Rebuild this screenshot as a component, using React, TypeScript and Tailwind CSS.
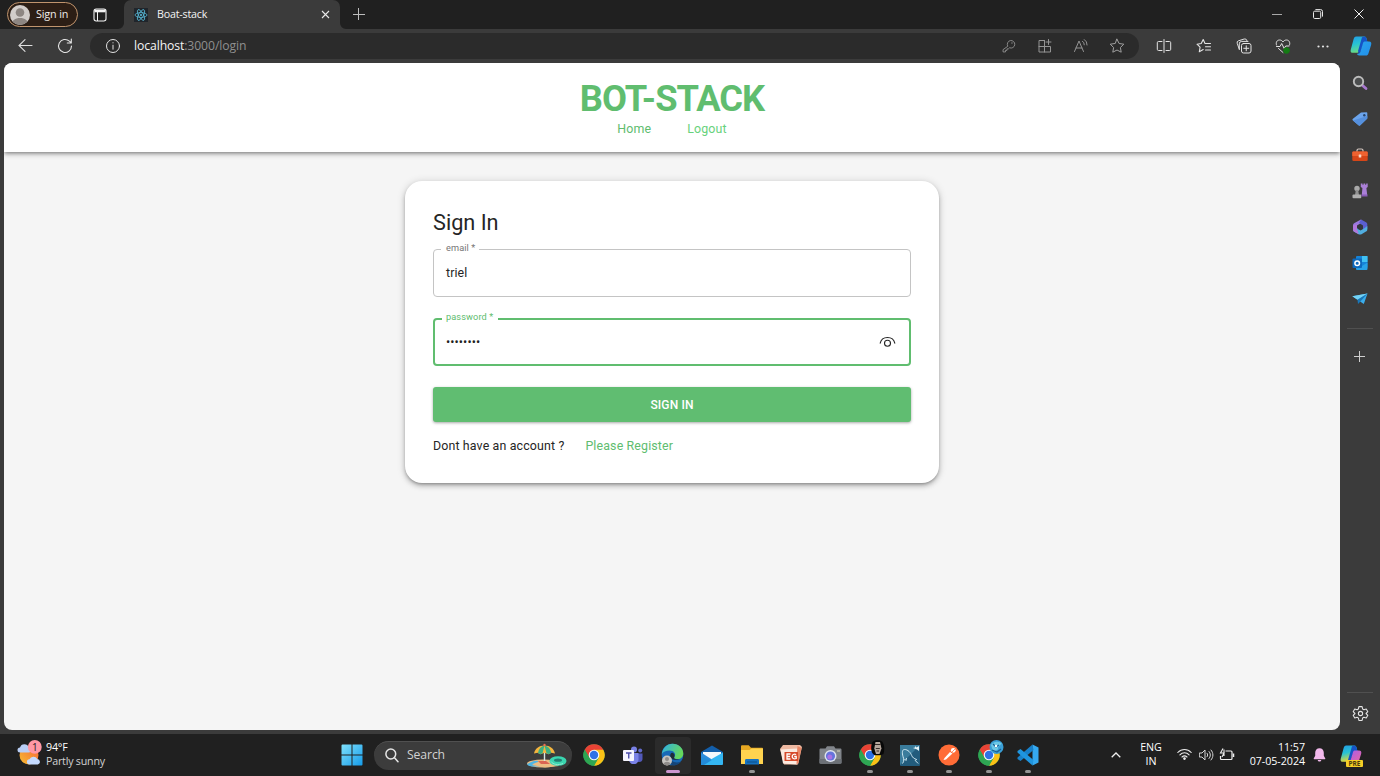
import React from "react";

type IconProps = { s?: number; c?: string; w?: number; children: React.ReactNode };

/* Stroked line icon on a 16 unit grid. */
const Line = ({ s = 16, c = "text-[#e4e4e4]", w = 1, children }: IconProps) => (
  <svg width={s} height={s} viewBox="0 0 16 16" fill="none" stroke="currentColor" strokeWidth={w} strokeLinecap="round" strokeLinejoin="round" className={`shrink-0 ${c}`}>
    {children}
  </svg>
);

const STAR = "M8 1.2l2.100 4.300 4.700.7-3.400 3.300.8 4.700L8 12l-4.200 2.200.8-4.700L1.200 6.200l4.700-.7z";

const Slot = ({ w, children }: { w: string; children?: React.ReactNode }) => (
  <div className={`flex h-full shrink-0 items-center justify-center ${w}`}>{children}</div>
);

function TitleBar() {
  return (
    <div className="flex h-[29px] shrink-0 items-center bg-[#202020]">
      <div className="ml-[7px] flex h-[25px] w-[71px] items-center rounded-full border border-[#c0946d] bg-[#2c1e15] pl-[2px]">
        <svg width="20" height="20" viewBox="0 0 20 20">
          <defs><clipPath id="avatar"><circle cx="10" cy="10" r="10" /></clipPath></defs>
          <g clipPath="url(#avatar)">
            <rect width="20" height="20" fill="#d2cdca" />
            <circle cx="10" cy="7.5" r="4.3" fill="#8d8682" />
            <path d="M2 20c0-5 3-7 8-7s8 2 8 7z" fill="#8d8682" />
          </g>
        </svg>
        <span className="ml-[6px] text-[10.8px] leading-none tracking-[-0.15px] whitespace-nowrap text-[#f2eeeb]">Sign in</span>
      </div>
      <Slot w="w-[43px]">
        <svg width="14" height="14" viewBox="0 0 14 14" fill="none" stroke="#f4f4f4">
          <rect x="1" y="1" width="12" height="12" rx="2.2" strokeWidth="1.1" />
          <path d="M1.500 3h11" strokeWidth="2.6" />
          <path d="M4.500 4v9" strokeWidth="1" />
        </svg>
      </Slot>
      <div className="relative ml-[3px] flex h-full w-[216px] items-center rounded-t-[7px] bg-[#3b3b3b]">
        <svg className="absolute bottom-0 -left-[6px]" width="6" height="6"><path d="M6 0v6H0a6 6 0 0 0 6-6" fill="#3b3b3b" /></svg>
        <svg className="absolute -right-[6px] bottom-0" width="6" height="6"><path d="M0 0v6h6a6 6 0 0 1-6-6" fill="#3b3b3b" /></svg>
        <svg className="ml-[10px]" width="14" height="14" viewBox="0 0 14 14" fill="none" stroke="#58b9d6" strokeWidth=".8">
          <rect width="14" height="14" fill="#20252b" stroke="none" />
          <ellipse cx="7" cy="7" rx="6" ry="2.4" />
          <ellipse cx="7" cy="7" rx="6" ry="2.4" transform="rotate(60 7 7)" />
          <ellipse cx="7" cy="7" rx="6" ry="2.4" transform="rotate(120 7 7)" />
          <circle cx="7" cy="7" r="1.1" fill="#58b9d6" stroke="none" />
        </svg>
        <span className="ml-[9px] text-[10.7px] leading-none tracking-[-0.200px] whitespace-nowrap text-[#f4f4f4]">Boat-stack</span>
        <div className="mr-[10px] ml-auto flex">
          <svg width="9" height="9" viewBox="0 0 9 9" stroke="#e8e8e8" strokeWidth="1.1"><path d="M1 1l7 7M8 1L1 8" /></svg>
        </div>
      </div>
      <svg className="mb-[2px] ml-[13px]" width="12" height="12" viewBox="0 0 12 12" stroke="#bdbdbd"><path d="M0 6.500h12M5.500 0v12" /></svg>
      <div className="ml-auto flex h-[28px] self-start">
        <Slot w="w-[41px]"><svg width="10" height="10" viewBox="0 0 10 10" stroke="#a8a8a8"><path d="M0 5.500h10" /></svg></Slot>
        <Slot w="w-[41px]">
          <svg width="10" height="10" viewBox="0 0 10 10" fill="none" stroke="#e8e8e8"><rect x=".5" y="2.200" width="7.200" height="7.300" rx="1.200" /><path d="M2.400.6h5.200a1.900 1.900 0 0 1 1.900 1.900v5.100" /></svg>
        </Slot>
        <Slot w="w-[42px]"><svg width="10" height="10" viewBox="0 0 10 10" stroke="#f2f2f2"><path d="M.5.5l9 9M9.500.5l-9 9" /></svg></Slot>
      </div>
    </div>
  );
}

function CopilotIcon({ id, size, warm }: { id: string; size: number; warm?: boolean }) {
  return (
    <svg width={size} height={size} viewBox="0 0 22 22">
      <defs>
        <linearGradient id={`${id}a`} x1="0" y1="0" x2=".3" y2="1"><stop offset="0" stopColor="#239ae6" /><stop offset=".5" stopColor="#27c3d4" /><stop offset="1" stopColor={warm ? "#e7d832" : "#6bdc83"} /></linearGradient>
        <linearGradient id={`${id}b`} x1="0" y1="0" x2="1" y2="1"><stop offset="0" stopColor={warm ? "#a05cf2" : "#29a5ec"} /><stop offset="1" stopColor={warm ? "#f0679b" : "#228eea"} /></linearGradient>
      </defs>
      <path d="M6.200 1.500h8.100c1.300 0 1.900.9 2.300 2.300L17.400 7H14c-1.700 0-2.300 1-2.800 2.600L9.400 15.500C9 17 8.200 17.800 6.700 17.800H3C.9 17.800.2 16.500.8 14.400L3.500 4.500C4 2.600 4.700 1.500 6.200 1.500z" fill={`url(#${id}a)`} />
      <path d="M12 2.200l2.600-.6c1.200.2 1.700 1 2 2.200l.9 3.400-4 .7-3 9-1.500 2.200L8 16z" fill="#1553c6" />
      <path d="M14.500 6.500h4.600c2 0 2.600 1.400 2 3.400l-2.500 8c-.6 1.900-1.300 2.600-2.800 2.600H9.200c-1.200 0-1.900-.5-2.200-1.700 2 .2 3-.5 3.500-2.200l2.300-7.900c.3-1.200.8-2 1.700-2.200z" fill={`url(#${id}b)`} />
    </svg>
  );
}

function Toolbar() {
  return (
    <div className="flex h-[34px] shrink-0 items-center bg-[#3b3b3b]">
      <Slot w="w-[50px]">
        <svg width="15" height="14" viewBox="0 0 15 14" fill="none" stroke="#dedede" strokeWidth="1.100" strokeLinecap="round"><path d="M14 6.500H1M7 .7L1 6.500l6 5.800" /></svg>
      </Slot>
      <Slot w="w-[30px]">
        <Line s={16} w={1.1}><path d="M14.500 8A6.500 6.500 0 1 1 12.400 3.200L14 4.700M14.300 1v4h-4" /></Line>
      </Slot>
      <div className="ml-[10px] flex h-[26px] w-[1049px] items-center rounded-full bg-[#2b2b2b]">
        <div className="ml-[15px] flex"><Line s={16}><circle cx="8" cy="8" r="6.500" /><path d="M8 7.200v4M8 4.700v.2" /></Line></div>
        <span className="ml-[13px] pt-px text-[12.200px] leading-none tracking-[-0.090px] whitespace-nowrap text-[#8f8f8f]"><span className="text-[#f5f5f5]">localhost</span>:3000/login</span>
        <div className="mr-[4px] ml-auto flex h-full">
          <Slot w="w-[36px]"><Line s={14} c="text-[#949494]"><path d="M6.400 7.900a4.300 4.300 0 1 1 2.200 2.100L7.300 11.300H5.700v1.700H4v1.800H1.200v-2.200z" /><path d="M11.400 4.600v.1" strokeWidth="1.500" /></Line></Slot>
          <Slot w="w-[36px]"><Line s={16} c="text-[#949494]"><path d="M7.500 2.500H2v11.500h11.500V8.500H2M7.500 2.500V14M11.500 1.500v5M9 4h5" /></Line></Slot>
          <Slot w="w-[36px]"><Line s={16} c="text-[#949494]"><path d="M1.500 13.500L6 3l4.500 10.500M3 10h6M9.500 3.200a4 4 0 0 1 1.800 3.600M11.300 1.500a6 6 0 0 1 2.800 5.500" /></Line></Slot>
          <Slot w="w-[36px]"><Line s={16} c="text-[#a0a0a0]"><path d={STAR} /></Line></Slot>
        </div>
      </div>
      <div className="ml-[5px] flex h-full">
        <Slot w="w-[40px]"><Line><path d="M8 1.500v13M6 3.500H2.500a1.200 1.200 0 0 0-1.200 1.200v6.600a1.200 1.200 0 0 0 1.200 1.200H6M10 3.500h3.500a1.200 1.200 0 0 1 1.200 1.200v6.600a1.200 1.200 0 0 1-1.200 1.200H10" /></Line></Slot>
        <Slot w="w-[40px]"><Line w={1.1}><path d="M9 5.500L7.200 1.500 5.200 5.500 1 6.200l3.100 3-.8 4.600L7.200 11.600M9 5.500h5.500M9.500 8.700h5M9.500 12h5" /></Line></Slot>
        <Slot w="w-[39px]"><Line><rect x="5.500" y="5.500" width="9.500" height="9.500" rx="2" /><path d="M10.250 7.800v5M7.750 10.300h5M3.300 11.300L1.200 5.300a2 2 0 0 1 1.300-2.500L8.200 1a2 2 0 0 1 2.500 1.300l.3.900M3.300 11.300V5.800a2.400 2.400 0 0 1 2.400-2.400H12" /></Line></Slot>
        <Slot w="w-[40px]"><Line><path d="M1.500 7C.5 4.500 2 2 4.500 2 6 2 7.200 2.700 8 4c.8-1.300 2-2 3.500-2C14 2 15.500 4.500 14.500 7M1.500 8.500H5L6.700 5.500l2.500 5L10.700 8H14M3.500 10.500L8 14.500" /><circle cx="11.500" cy="12.500" r="3" fill="#147b14" stroke="#147b14" strokeWidth=".6" /></Line></Slot>
        <Slot w="w-[39px]"><svg width="12" height="3" viewBox="0 0 12 3" fill="#e4e4e4"><circle cx="1.500" cy="1.500" r="1.100" /><circle cx="6" cy="1.500" r="1.100" /><circle cx="10.500" cy="1.500" r="1.100" /></svg></Slot>
        <Slot w="w-[37px]"><CopilotIcon id="top" size={22} /></Slot>
      </div>
    </div>
  );
}

function Sidebar() {
  const icons = [
    <g key="search"><path d="M10 10l4 3.500" stroke="#a878cf" strokeWidth="2.800" strokeLinecap="round" /><circle cx="6.500" cy="6.500" r="4.700" fill="#4b4d4e" stroke="#bcbcbc" strokeWidth="1.900" /></g>,
    <g key="tag"><path d="M9 1.500l5.500-.3c.5 0 .8.300.8.800V7.500L8.300 14.300c-.6.600-1.200.600-1.800 0L.9 9.600c-.6-.6-.6-1.200 0-1.800z" fill="#6ba4ec" /><path d="M1 9.500L15.300 5v2.600L8.300 14.300c-.6.600-1.200.600-1.800 0z" fill="#5590de" /><circle cx="12.300" cy="4.300" r="1.200" fill="#25456f" /></g>,
    <g key="tools"><path d="M5 5V3.500C5 2.300 5.500 2 6.500 2h3c1 0 1.500.3 1.500 1.500V5" fill="none" stroke="#d5c7c0" strokeWidth="1.200" /><rect x=".3" y="4.500" width="15.400" height="9.500" rx="1.300" fill="#d64618" /><path d="M.3 5.800c0-.8.500-1.300 1.300-1.300h12.800c.8 0 1.300.5 1.300 1.300V9H.3z" fill="#ee6230" /><rect x="6.700" y="7.500" width="2.600" height="3" rx=".5" fill="#f5d9c9" /></g>,
    <g key="games"><circle cx="5" cy="5.500" r="2.700" fill="#a9a9a9" /><path d="M3.800 7h2.400l.8 5H3z" fill="#929292" /><rect x=".5" y="11.500" width="8.800" height="3.800" rx="1" fill="#b0b0b0" /><path d="M8.800 .5h1.700v1.200h1V.5h1.700v1.200h1V.5h1.500v3.500l-1.300 1 .8 7H9.800l.6-7-1.600-1z" fill="#aa80d7" /><path d="M9.500 11.500h6V13.500H9.500z" fill="#8a5cb9" /></g>,
    <g key="m365"><path d="M9 .5L2.500 4C1.500 4.600 1 5.300 1 6.500v4l4 1.500V6.500L11 3z" fill="#9b78df" /><path d="M9 .5l5 2.800c1 .6 1.300 1.200 1.300 2.300V10L11 12V6.500L7 4z" fill="#5a5fd1" /><path d="M15.300 7v3.500c0 1-.4 1.600-1.300 2.100L9.500 15.200c-1 .5-2 .5-3 0L1.800 12.400c-.5-.3-.8-.9-.8-1.900L5 9l3.500 2.500L12 9.500z" fill="#50aee0" /><path d="M1 6.500v4c0 1 .3 1.600.8 1.900l5 2.800L5 10V5.500z" fill="#b277dc" /><circle cx="8" cy="8" r="2.600" fill="#33363f" /></g>,
    <g key="outlook"><rect x="4" y="1" width="11.500" height="12" rx="1" fill="#1683d7" /><path d="M10 1h5.500v6H10z" fill="#40c1f3" /><path d="M4 8l6 3 5.500-3.500V14a1 1 0 0 1-1 1H5a1 1 0 0 1-1-1z" fill="#27a1e7" /><rect x=".5" y="3.500" width="9.500" height="9.500" rx="1" fill="#0d69bd" /><circle cx="5.200" cy="8.200" r="2.300" fill="none" stroke="#fff" strokeWidth="1.500" /></g>,
    <g key="drop"><path d="M.3 5.300L15.500 2.500 11.800 13 7 9.800z" fill="#3badeb" /><path d="M.3 5.300L15.500 2.500 5.500 8.700z" fill="#73d2f5" /><path d="M5.500 8.700L15.500 2.500 8.200 10.700 6 13z" fill="#1a77b8" /></g>,
  ];
  return (
    <div className="flex w-[40px] shrink-0 flex-col items-center bg-[#3b3b3b]">
      <div className="mt-[2px] flex flex-col">
        {icons.map((g, i) => (
          <div key={i} className="flex h-[36px] items-center"><svg width="16" height="16" viewBox="0 0 16 16" fill="none">{g}</svg></div>
        ))}
      </div>
      <div className="mt-[11px] h-px w-[26px] bg-[#505050]" />
      <svg className="mt-[22px] mr-px" width="11" height="11" viewBox="0 0 11 11" stroke="#cfcfcf"><path d="M0 5.500h11M5.500 0v11" /></svg>
      <div className="mt-auto h-px w-[26px] bg-[#505050]" />
      <div className="mt-[12px] mb-[12px]">
        <Line s={17}><path d="M6.500 1.500h3l.5 2.200 1.200.7 2.200-.7 1.500 2.600L13.200 8l1.700 1.700-1.500 2.600-2.200-.7-1.200.7-.5 2.200h-3L6 12.300l-1.200-.7-2.200.7L1.100 9.700 2.800 8 1.100 6.300l1.500-2.600 2.200.7L6 3.700z" /><circle cx="8" cy="8" r="2" /></Line>
      </div>
    </div>
  );
}

function Page() {
  return (
    <div className="flex min-w-0 grow flex-col overflow-hidden rounded-[8px] bg-[#f5f5f5] font-['Roboto',sans-serif]">
      <header className="flex h-[89px] shrink-0 flex-col items-center bg-white shadow-[0_2px_3px_-1px_rgba(0,0,0,0.3),0_3px_4px_rgba(0,0,0,0.14),0_1px_7px_rgba(0,0,0,0.12)]">
        <h1 className="mt-[18px] h-[36px] text-[36.300px] leading-[36px] font-bold tracking-[-0.950px] text-[#60bd6f]">BOT-STACK</h1>
        <nav className="mt-[3px] flex gap-[36px] text-[12.400px] leading-[17px] tracking-[0.150px] text-[#60bd6f]">
          <a>Home</a>
          <a className="text-[#67d27c]">Logout</a>
        </nav>
      </header>
      <main className="mt-[29px] flex h-[302px] w-[534px] flex-col self-center rounded-[17px] bg-white px-[28px] shadow-[0_2px_3px_-1px_rgba(0,0,0,0.26),0_3px_5px_rgba(0,0,0,0.18),0_1px_9px_rgba(0,0,0,0.16)]">
        <h2 className="mt-[28px] text-[21.700px] leading-[28px] text-[#252525]">Sign In</h2>
        <div className="relative mt-[12px] flex h-[48px] w-[478px] items-center rounded-[4px] border border-[#c4c4c4] px-[12px]">
          <label className="absolute -top-[9px] left-[7px] bg-white pr-[4px] pl-[5px] text-[9.200px] leading-[13px] tracking-[0.1px] text-[#757575]">email *</label>
          <span className="pt-px text-[12.400px] leading-none tracking-[0.1px] text-[#252525]">triel</span>
        </div>
        <div className="relative mt-[21px] flex h-[48px] w-[478px] items-center rounded-[4px] border-2 border-[#60bd6f] pr-[13px] pl-[11px]">
          <label className="absolute -top-[10px] left-[7px] bg-white pr-[5px] pl-[4px] text-[9.200px] leading-[13px] tracking-[0.1px] text-[#60bd6f]">password *</label>
          <span className="text-[12.400px] leading-none tracking-[0.100px] text-[#1f1f1f]">••••••••</span>
          <svg className="ml-auto" width="17" height="12" viewBox="0 0 17 12" fill="none" stroke="#252525" strokeWidth="1.100" strokeLinecap="round"><path d="M1.200 7.200C2 3.500 4.800 1.500 8.500 1.500s6.500 2 7.300 5.700" /><circle cx="8.500" cy="7.200" r="3" /></svg>
        </div>
        <button className="mt-[21px] flex h-[35px] w-[478px] items-center justify-center rounded-[3px] bg-[#60bd71] text-[12px] leading-none font-medium tracking-[0.120px] text-white shadow-[0_1px_3px_rgba(0,0,0,0.35)]">SIGN IN</button>
        <p className="mt-[14px] flex gap-[21px] text-[12.400px] leading-[19px] tracking-[0.140px] whitespace-nowrap text-[#252525]">
          <span>Dont have an account ?</span>
          <a className="text-[#60bd6f]">Please Register</a>
        </p>
      </main>
    </div>
  );
}

const Chrome = ({ badge }: { badge?: React.ReactNode }) => (
  <svg width="30" height="30" viewBox="0 0 30 30">
    <circle cx="15" cy="15" r="10.700" fill="#2ea653" />
    <path d="M15 15L5.700 9.650A10.700 10.700 0 0 1 24.300 9.650z" fill="#e94235" />
    <path d="M15 9.650h9.270A10.700 10.700 0 0 1 15 25.700l4.630-8.020z" fill="#fbc116" />
    <path d="M5.730 9.650L10.370 17.680 15 15V9.650z" fill="#e94235" />
    <path d="M10.370 17.680L5.730 9.650A10.700 10.700 0 0 0 15 25.700l4.630-8.020L15 20z" fill="#2ea653" />
    <circle cx="15" cy="15" r="5.300" fill="#f6f8fc" />
    <circle cx="15" cy="15" r="4.200" fill="#2e72e6" />
    {badge}
  </svg>
);

function AppSlot({ dot, active, children }: { dot?: boolean; active?: boolean; children: React.ReactNode }) {
  return (
    <div className={`relative flex h-[37px] w-[36px] shrink-0 items-center justify-center rounded-[4px] ${active ? "bg-[#2b2b2b]" : ""}`}>
      {children}
      {active && <div className="absolute bottom-[1px] left-[11px] h-[3px] w-[14px] rounded-full bg-[#cd96d0]" />}
      {dot && <div className="absolute bottom-[1px] left-[15px] h-[3px] w-[6px] rounded-full bg-[#939393]" />}
    </div>
  );
}

function Taskbar() {
  return (
    <div className="flex h-[42px] shrink-0 items-center bg-[#202020]">
      <div className="flex w-[332px] shrink-0 items-center pb-[2px] pl-[16px]">
        <svg width="28" height="28" viewBox="0 0 28 28">
          <defs><linearGradient id="sun" x1="1" y1="0" x2="0" y2="1"><stop offset="0" stopColor="#f4653b" /><stop offset="1" stopColor="#f8bd30" /></linearGradient></defs>
          <circle cx="13" cy="15" r="9.500" fill="url(#sun)" />
          <path d="M4 12.500a2.500 2.500 0 0 1 0-5 4.500 4.500 0 0 1 8.700 0 2.500 2.500 0 0 1 0 5z" fill="#b9cef5" />
          <path d="M13.500 24.500a2.600 2.600 0 0 1 0-5.200 4.300 4.300 0 0 1 7.800-.3 2.800 2.800 0 0 1 .5 5.500z" fill="#c4daff" />
          <circle cx="18.800" cy="6.900" r="6.900" fill="#ff98a5" />
          <text x="18.800" y="10.500" fontSize="10" textAnchor="middle" fill="#2b2022" fontFamily="Open Sans">1</text>
        </svg>
        <div className="ml-[2px] text-[10.700px] leading-[14px] tracking-[-0.220px] whitespace-nowrap">
          <div className="text-white">94°F</div>
          <div className="text-[#d2d2d2]">Partly sunny</div>
        </div>
      </div>
      <Slot w="w-[39px]">
        <svg width="22" height="22" viewBox="0 0 22 22">
          <defs><linearGradient id="win" x1="0" y1="0" x2="1" y2="1"><stop offset="0" stopColor="#7fe1fc" /><stop offset="1" stopColor="#159be9" /></linearGradient></defs>
          <path d="M1.500.5h9v10H.5v-9a1 1 0 0 1 1-1zM11.500.5h9a1 1 0 0 1 1 1v9h-10zM.5 11.500h10v10h-9a1 1 0 0 1-1-1zM11.500 11.500h10v9a1 1 0 0 1-1 1h-9z" fill="url(#win)" />
        </svg>
      </Slot>
      <div className="ml-[3px] flex h-[29px] w-[198px] shrink-0 items-center rounded-full border-t border-[#505050] bg-[#3c3c3c] pl-[11px]">
        <svg width="14" height="15" viewBox="0 0 14 15" fill="none" stroke="#e6e6e6" strokeWidth="1.500" strokeLinecap="round"><circle cx="5.800" cy="6" r="4.900" /><path d="M9.500 9.800l3.500 4" /></svg>
        <span className="ml-[8px] text-[12.200px] leading-none tracking-[-0.100px] text-[#d2d2d2]">Search</span>
        <svg className="mr-[4px] ml-auto" width="42" height="25" viewBox="0 0 42 25">
          <ellipse cx="17" cy="20.500" rx="16" ry="4" fill="#edbd83" />
          <path d="M1 21c5-2 7-4 11-3l3 5c-6 1-13 1-14-2z" fill="#4fb6e4" />
          <path d="M6 22c6-5 15-5 24-2l3 3-14 1.500z" fill="#edbd83" />
          <path d="M18.500 3v17" stroke="#d7e7e6" strokeWidth="1.400" />
          <path d="M8 10.500C9 5.500 13 2.500 18.500 2.500S28 5.500 29 10.500l-3.500-.800-3 1.500-4-1.500-4 1.500-3-1.500z" fill="#f4b53e" />
          <path d="M12 9.900c.5-4 3-6.500 6.500-7.400l-2 7.700-2 1zM18.500 2.500c4 1 6 3.500 6.700 7.400l-2.700 1.300-2-1z" fill="#3dae82" />
          <circle cx="18.500" cy="2" r="1.200" fill="#ef6e50" />
          <path d="M12 18h8l4 3h-9z" fill="#db6553" />
          <ellipse cx="32" cy="18" rx="8.500" ry="4.800" fill="#3ad6b0" />
          <ellipse cx="32" cy="17.200" rx="4" ry="1.600" fill="#237c70" />
          <path d="M25 18.500c2 3 7 4 12 2" stroke="#91ead0" fill="none" />
        </svg>
      </div>
      <div className="ml-[4px] flex w-[470px] shrink-0 justify-between">
        <AppSlot><Chrome /></AppSlot>
        <AppSlot>
          <svg width="20" height="18" viewBox="0 0 20 18"><circle cx="11" cy="3.500" r="3" fill="#7981e5" /><circle cx="17.200" cy="4.500" r="2" fill="#626acb" /><path d="M13 7.500h6.500v5.500c0 2-1.500 3-3 3h-3z" fill="#5259bb" /><path d="M6 7h9.500v6a4.500 4.500 0 0 1-9.500 1z" fill="#7a82e6" /><rect y="4" width="11" height="11" rx="1" fill="#f6f5ff" /><path d="M3 7h5.500M5.750 7v5.500" stroke="#4d4fac" strokeWidth="1.400" /></svg>
        </AppSlot>
        <AppSlot active>
          <svg width="23" height="24" viewBox="0 0 23 24">
            <defs><linearGradient id="edge" x1="0" y1="0" x2="1" y2=".4"><stop offset="0" stopColor="#2daeea" /><stop offset="1" stopColor="#66d85c" /></linearGradient></defs>
            <circle cx="11.500" cy="11.500" r="10.800" fill="#1769b7" />
            <path d="M.8 11C1.500 5 5.700.7 11.500.7c6.500 0 10.800 4.500 10.800 10 0 3-2.300 5.300-5.500 5.300-3.500 0-4.300-1-3.300-2.300C15.500 10.500 12.500 7.500 8.500 7.500 5 7.500 2 9 .8 11z" fill="url(#edge)" />
            <path d="M8.300 12.500c0 5 5 8 10.500 6.500l1.500-.7c-2 3-5 4-7.500 4-4-.5-7-4-6.500-7z" fill="#154578" />
            <path d="M9.500 11c-1.500 4 2.500 7.500 9.500 5.200-2 .3-7 .2-5.700-2.300.7-1.300.3-3.500-1.300-4-1-.3-2 .2-2.500 1.100z" fill="#202d38" />
            <circle cx="6" cy="17.500" r="5" fill="#c6c4c1" /><circle cx="6" cy="16" r="2" fill="#8f8c8a" /><path d="M2.500 21a3.600 3 0 0 1 7 0 5 5 0 0 1-7 0z" fill="#8f8c8a" />
          </svg>
        </AppSlot>
        <AppSlot>
          <svg width="22" height="20" viewBox="0 0 22 20"><path d="M0 7l11-6.500L22 7v3H0z" fill="#135ea9" /><path d="M2 7h18v8H2z" fill="#f4f8fc" /><path d="M0 7.500l11 7L0 20z" fill="#2c8bdb" /><path d="M22 7.500L0 20h21a1 1 0 0 0 1-1z" fill="#34b6f2" /><path d="M0 20V12l11 3 3-2L3 20z" fill="#238bd8" /></svg>
        </AppSlot>
        <AppSlot dot>
          <svg width="22" height="20" viewBox="0 0 22 20"><path d="M0 1.500C0 .7.500.2 1.200.2h6.500L10 2.700h10.800c.7 0 1.200.5 1.200 1.200V8H0z" fill="#e7a822" /><path d="M0 5h8.500l2-1.500H22V19H0z" fill="#ffd34f" /><path d="M4 19.500v-4c0-1 .5-1.500 1.500-1.500h11c1 0 1.500.5 1.500 1.500v4z" fill="#1672c0" /><path d="M6 17h10" stroke="#0d4e88" /></svg>
        </AppSlot>
        <AppSlot>
          <svg width="22" height="20" viewBox="0 0 22 20"><path d="M3 0h17l2 2-4 17.500H4L0 4z" fill="#eeb9a2" /><path d="M.5 4.500L17 3.500v16L3 18.500z" fill="#fbe9df" /><path d="M17.500 1l4 2-3 15-2 1.500z" fill="#e98665" /><path d="M4.500 7h13.500v9H4.500z" fill="#d64a2b" /><path d="M10.500 9H7v5h3.500M7 11.500h3M16.200 9.500c-2.300-1-4 .3-4 2s1.700 3 4 2V11.500h-2" fill="none" stroke="#fff" strokeWidth="1.300" /></svg>
        </AppSlot>
        <AppSlot>
          <svg width="23" height="18" viewBox="0 0 23 18"><path d="M6.500 2.500L8 .3h7l1.500 2.200h4.700c.8 0 1.300.5 1.300 1.300V16.500c0 .8-.5 1.200-1.300 1.200H1.800C1 17.700.5 17.300.5 16.500V3.800c0-.8.5-1.300 1.300-1.300z" fill="#81858b" /><path d="M.5 13h22v3.500c0 .8-.5 1.200-1.300 1.200H1.800C1 17.700.5 17.300.5 16.500z" fill="#6d7177" /><circle cx="11.500" cy="10" r="6" fill="#dfe4ef" /><circle cx="11.500" cy="10" r="4.600" fill="#6674dc" /><circle cx="10.800" cy="11" r="2.500" fill="#aa72e5" /><path d="M18 5h3" stroke="#dbd6b8" /></svg>
        </AppSlot>
        <AppSlot dot><Chrome badge={<g><path d="M17.500 2c2-2.300 8-2.500 10 0 2 3 2.200 8 1 12l-3 1.200h-6C15.500 13 15.500 6 17.500 2z" fill="#080808" /><path d="M20.500 2h4.500l1.500 6.500-2 5.500H21l-1.700-5.500z" fill="#b5a69b" /><path d="M20 4.500h5.500M20.800 8.500h4M21.500 11h2.500" stroke="#342a27" /></g>} /></AppSlot>
        <AppSlot dot>
          <svg width="20" height="21" viewBox="0 0 20 21"><rect width="20" height="21" rx="1" fill="#225c7d" /><path d="M0 0h20L0 20z" fill="#3a7c9c" /><path d="M2.500 18.500C4.500 16 3.800 14 3 11.500 2 8 2 4.500 4.500 4.500c3.500 0 6 3 7.200 6 .8 2 2.300 3.200 5 4l-1.500 1 3 3M4.500 14l1.500 1.500.5-2.500" fill="none" stroke="#cfe8f2" strokeWidth="1" /><path d="M13 3l2-.5V1l1.500 1.500L19 1v5l-2-1.500z" fill="#e3f3f8" /></svg>
        </AppSlot>
        <AppSlot dot>
          <svg width="22" height="22" viewBox="0 0 22 22"><circle cx="11" cy="11" r="10.500" fill="#ff6c37" /><path d="M12 8l2.500 1.500-6.500 6-2.500.5 1-2z" fill="#fff" /><circle cx="15.300" cy="6.300" r="2.400" fill="#fff" /><path d="M13 9l4-4" stroke="#ff6c37" strokeWidth=".7" /></svg>
        </AppSlot>
        <AppSlot dot><Chrome badge={<g><circle cx="22.500" cy="7" r="7" fill="#3a9fd6" /><path d="M17 5c3-4 8-4 11-1-2 0-2 2-4 3 1 2-1 4-5 4z" fill="#6cc9e6" /><path d="M19 4l3 3 3-2M18 10l5 2 4-3" stroke="#1b5f96" fill="none" strokeWidth="1.200" /><circle cx="22" cy="6" r="1.200" fill="#fff" /></g>} /></AppSlot>
        <AppSlot dot>
          <svg width="22" height="22" viewBox="0 0 22 22"><path d="M15.500.5l6 3v15l-6 3z" fill="#35a9f0" /><path d="M15.500.5L16.500 6 3.500 17 .5 15V13.500z" fill="#1880c9" /><path d="M.5 8.500V7l3-2L16.500 16l-1 5.500z" fill="#1f95df" /></svg>
        </AppSlot>
      </div>
      <div className="ml-auto flex h-full shrink-0 items-center">
        <Slot w="w-[28px]"><svg width="10" height="6" viewBox="0 0 10 6" fill="none" stroke="#efefef" strokeWidth="1.300"><path d="M.7 5.200L5 1l4.300 4.200" /></svg></Slot>
        <div className="w-[42px] pb-[2px] text-center text-[10.700px] leading-[14px] tracking-[-0.100px] text-white"><div>ENG</div><div>IN</div></div>
        <Slot w="w-[24px]"><svg className="mb-[2px]" width="15" height="12" viewBox="0 0 15 12" fill="none" stroke="#eaeaea" strokeWidth="1.100" strokeLinecap="round"><path d="M.8 4.500c3.700-4 9.700-4 13.400 0M2.900 6.800c2.600-2.800 6.600-2.800 9.200 0M5 9c1.500-1.500 3.500-1.500 5 0" /><circle cx="7.500" cy="10.600" r=".8" fill="#eaeaea" /></svg></Slot>
        <Slot w="w-[20px]"><svg width="15" height="12" viewBox="0 0 15 12" fill="none" stroke="#d8d8d8" strokeLinecap="round" strokeLinejoin="round"><path d="M.7 4H3l3-3v10L3 8H.7zM8 4.200c.9 1 .9 2.600 0 3.600M10 2.500c1.800 2 1.800 5 0 7M12 1c2.600 3 2.600 7 0 10" /></svg></Slot>
        <Slot w="w-[22px]"><svg width="16" height="14" viewBox="0 0 16 14" fill="none" stroke="#efefef" strokeWidth="1.200"><path d="M6.500 3H12a1 1 0 0 1 1 1v6.500a1 1 0 0 1-1 1H2.500a1 1 0 0 1-1-1V8" /><path d="M14.500 5.500v3.500" strokeWidth="1.500" /><path d="M4 .5L1.500 5H5L3 9M5 1.500V8" strokeWidth="1.100" /></svg></Slot>
        <div className="w-[67px] pb-[2px] text-right text-[10.700px] leading-[14px] tracking-[-0.050px] whitespace-nowrap text-white"><div>11:57</div><div>07-05-2024</div></div>
        <Slot w="w-[28px]"><svg width="13" height="14" viewBox="0 0 13 14" fill="#f2b9ec"><path d="M6.500.3c2.700 0 4.300 2 4.300 4.500v3l1.500 2.700c.2.500 0 .8-.5.8H1.200c-.5 0-.7-.3-.5-.8l1.500-2.700v-3C2.200 2.300 3.800.3 6.500.3zM4.700 12h3.600c-.2 1-.9 1.600-1.800 1.600S4.900 13 4.700 12z" /></svg></Slot>
        <div className="relative mr-[18px] ml-[7px] flex w-[22px] justify-center">
          <CopilotIcon id="tray" size={22} warm />
          <span className="absolute -right-px -bottom-px h-[7px] w-[17px] rounded-[1px] bg-[#f6ce26] text-center text-[6.500px] leading-[7px] font-bold text-[#493a0c]">PRE</span>
        </div>
      </div>
    </div>
  );
}

export default function App() {
  return (
    <div className="flex h-[776px] w-[1380px] flex-col overflow-hidden bg-[#3b3b3b] font-['Open_Sans',sans-serif]">
      <TitleBar />
      <Toolbar />
      <div className="flex min-h-0 grow">
        <div className="flex min-w-0 grow pb-[4px] pl-[4px]"><Page /></div>
        <Sidebar />
      </div>
      <Taskbar />
    </div>
  );
}
